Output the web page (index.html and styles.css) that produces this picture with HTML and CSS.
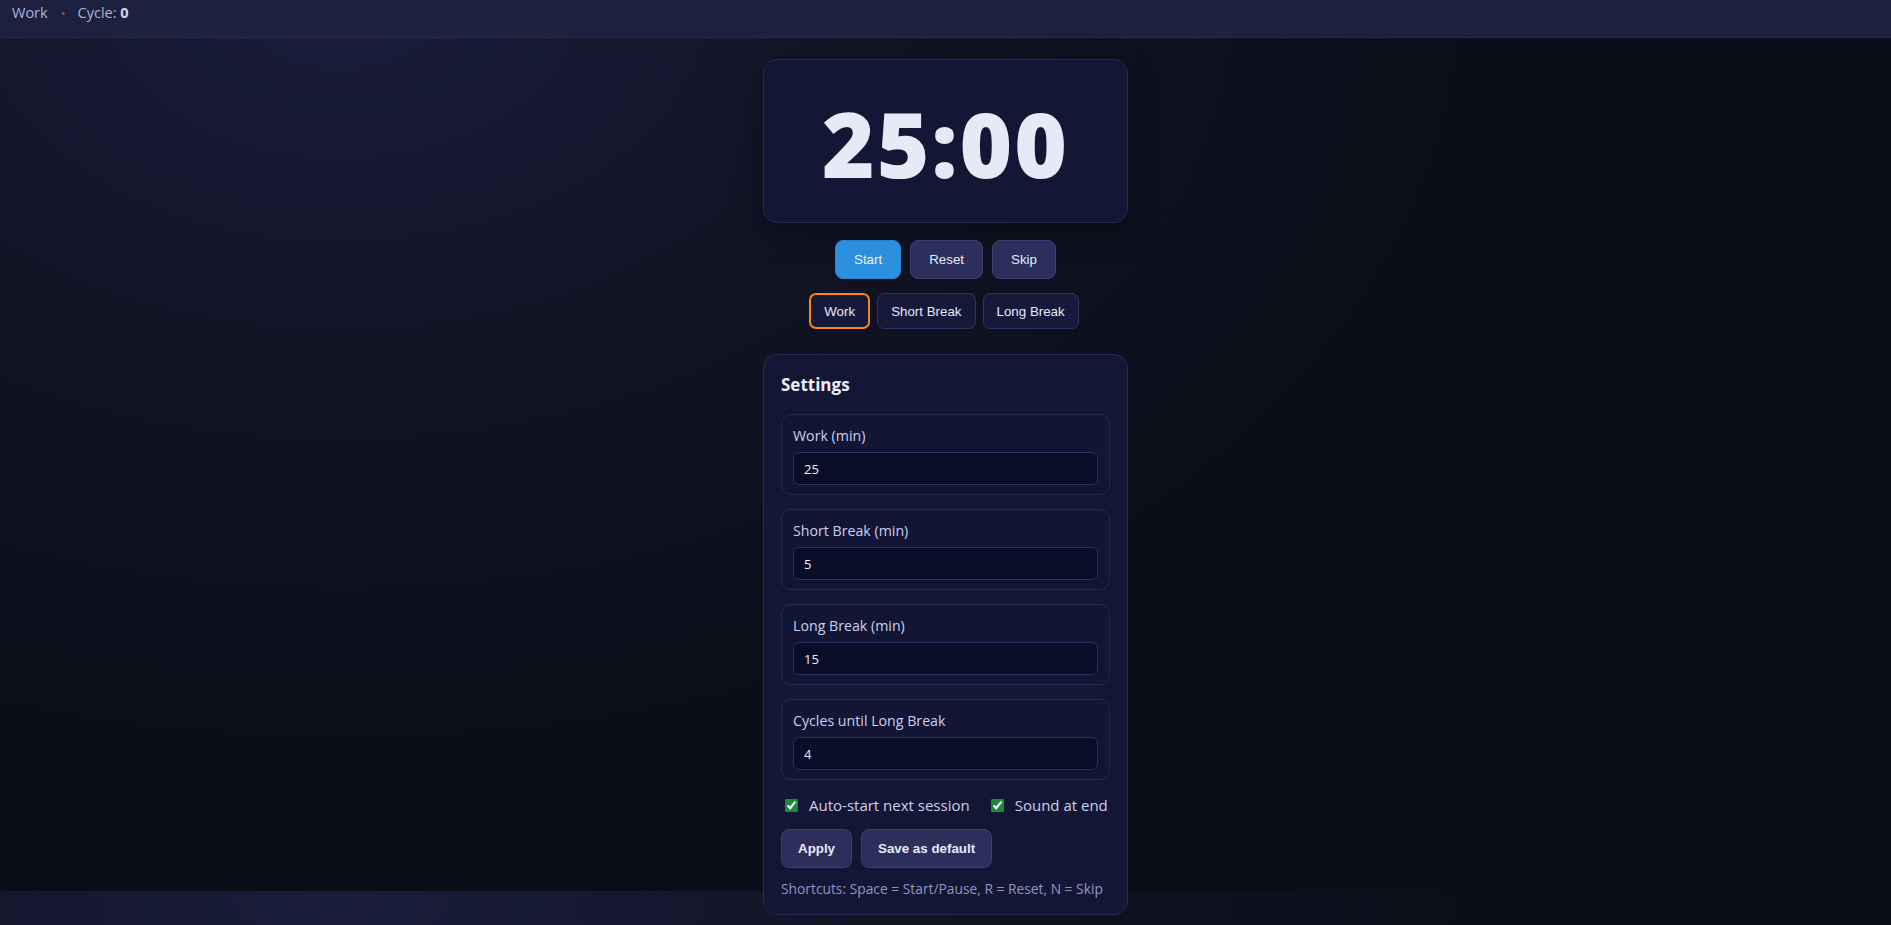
FILE: index.html
```html
<!DOCTYPE html>
<html lang="en">
<head>
<meta charset="utf-8">
<title>Pomodoro</title>
<link rel="stylesheet" href="styles.css">
</head>
<body>
<header class="topbar">
  <span class="mode-name">Work</span>
  <span class="sep">•</span>
  <span class="cycle">Cycle: <b>0</b></span>
</header>
<main class="app">
  <section class="timer-card">
    <div class="time">25:00</div>
  </section>
  <div class="controls">
    <button class="btn btn-primary">Start</button>
    <button class="btn">Reset</button>
    <button class="btn">Skip</button>
  </div>
  <div class="modes">
    <button class="mode active">Work</button>
    <button class="mode">Short Break</button>
    <button class="mode">Long Break</button>
  </div>
  <section class="settings">
    <h2 class="settings-title">Settings</h2>
    <div class="fields">
      <label class="field">
        <span class="field-label">Work (min)</span>
        <input class="field-input" type="text" value="25">
      </label>
      <label class="field">
        <span class="field-label">Short Break (min)</span>
        <input class="field-input" type="text" value="5">
      </label>
      <label class="field">
        <span class="field-label">Long Break (min)</span>
        <input class="field-input" type="text" value="15">
      </label>
      <label class="field">
        <span class="field-label">Cycles until Long Break</span>
        <input class="field-input" type="text" value="4">
      </label>
    </div>
    <div class="checks">
      <label class="check"><input type="checkbox" checked><span>Auto-start next session</span></label>
      <label class="check"><input type="checkbox" checked><span>Sound at end</span></label>
    </div>
    <div class="actions">
      <button class="btn btn-bold">Apply</button>
      <button class="btn btn-bold">Save as default</button>
    </div>
    <p class="shortcuts">Shortcuts: Space = Start/Pause, R = Reset, N = Skip</p>
  </section>
</main>
</body>
</html>
```
FILE: styles.css
```css
html {
  background-color: #0b0d18;
  background-image: radial-gradient(ellipse 1150px 760px at 18% 0%, #1a1d3b 0%, #121426 45%, #0b0d18 100%);
  background-size: 100% 891px;
  background-repeat: repeat-y;
}

body {
  margin: 0;
  font-family: "Open Sans", "Noto Sans", Arial, sans-serif;
  color: #e6e8f6;
}

.topbar {
  border-bottom: 1px solid #282b4e;
  background: #1e2040;
  display: flex;
  align-items: flex-start;
  padding: 3px 0 0 12px;
  box-sizing: border-box;
  height: 38px;
  font-size: 14.5px;
  line-height: 20px;
  color: #aab3da;
}

.topbar .sep {
  margin: 0 12px 0 13px;
  color: #5a6090;
  font-size: 13px;
}

.topbar b {
  color: #cfd5f1;
  font-weight: 700;
}

.app {
  display: flex;
  flex-direction: column;
  align-items: center;
  padding-top: 21px;
}

.timer-card {
  width: 365px;
  box-sizing: border-box;
  padding: 38px 0 34px;
  border: 1px solid #262a52;
  border-radius: 14px;
  background: #131735;
  box-shadow: 0 10px 30px rgba(0, 0, 0, 0.35);
  text-align: center;
}

.time {
  font-family: "Open Sans", sans-serif;
  font-weight: 800;
  font-size: 90px;
  line-height: 90px;
  color: #e7e9f6;
  letter-spacing: 2px;
}

.controls {
  display: flex;
  gap: 9px;
  margin-top: 17px;
}

.btn {
  height: 39px;
  padding: 0 18px;
  border: 1px solid #3a3e72;
  border-radius: 8px;
  background: #2c2f5c;
  color: #e8eaf7;
  font-family: "Liberation Sans", Arial, sans-serif;
  font-size: 13.33px;
}

.btn-primary {
  background: #2a8fdc;
  border-color: #2a84cf;
  color: #eef4fb;
}

.btn-bold {
  font-weight: 700;
  padding: 0 16px;
}

.modes {
  display: flex;
  gap: 7px;
  margin-top: 14px;
  margin-right: 3px;
}

.mode {
  height: 36px;
  padding: 0 13px;
  border: 1px solid #2d3261;
  border-radius: 7px;
  background: #161a3a;
  color: #e6e8f6;
  font-family: "Liberation Sans", Arial, sans-serif;
  font-size: 13.33px;
}

.mode.active {
  border: 2px solid #f28c0f;
  padding: 0 13px;
}

.settings {
  width: 365px;
  box-sizing: border-box;
  margin-top: 25px;
  padding: 19px 17px 15px;
  border: 1px solid #262a52;
  border-radius: 14px;
  background: #131735;
}

.settings-title {
  margin: 0 0 18px;
  font-size: 17px;
  line-height: 22px;
  font-weight: 700;
  color: #eceef9;
}

.fields {
  display: flex;
  flex-direction: column;
  gap: 14px;
}

.field {
  display: flex;
  flex-direction: column;
  padding: 10px 11px 9px;
  border: 1px solid #252a52;
  border-radius: 10px;
  background: #121634;
}

.field-label {
  font-size: 14.2px;
  line-height: 22px;
  margin-bottom: 5px;
  color: #cad0f0;
}

.field-input {
  height: 33px;
  box-sizing: border-box;
  width: 100%;
  padding: 0 10px;
  border: 1px solid #2b305d;
  border-radius: 6px;
  background: #0a0d27;
  color: #eef0fa;
  font-family: "Open Sans", sans-serif;
  font-size: 13px;
}

.checks {
  display: flex;
  gap: 17px;
  margin-top: 14px;
  height: 22px;
  align-items: center;
  white-space: nowrap;
}

.check {
  display: flex;
  flex-shrink: 0;
  align-items: center;
  gap: 11px;
  font-size: 15px;
  color: #cad0f0;
}

.check input {
  margin: 0 0 0 4px;
  width: 13px;
  height: 13px;
  accent-color: #1c8a3e;
}

.actions {
  display: flex;
  gap: 9px;
  margin-top: 13px;
}

.shortcuts {
  margin: 11px 0 0;
  font-size: 13.8px;
  line-height: 20px;
  color: #8f96c3;
}
```
